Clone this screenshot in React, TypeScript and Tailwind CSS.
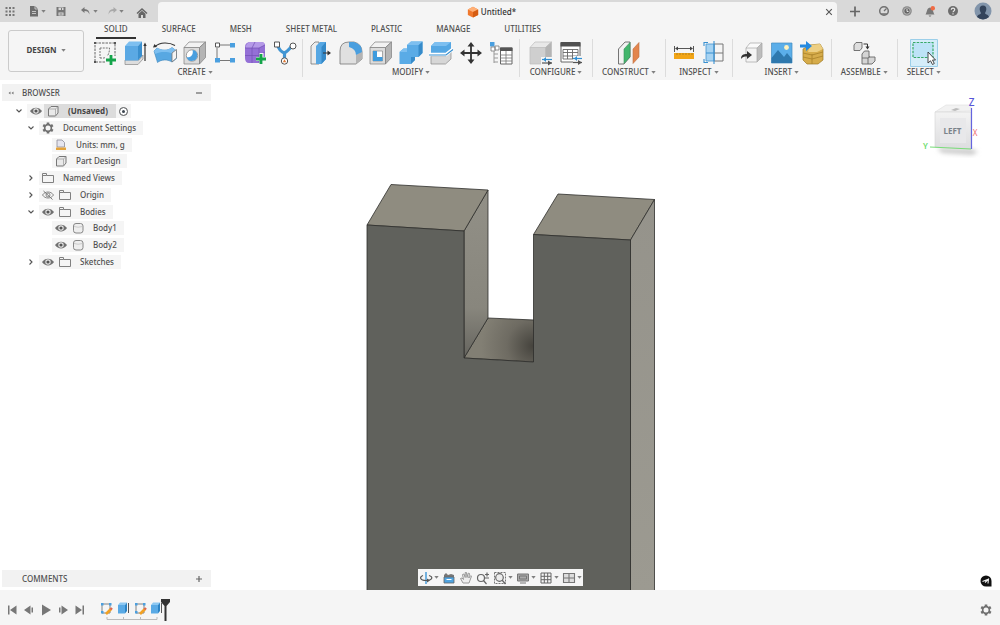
import type { ReactNode } from "react";
import clsx from "clsx";

type IconProps = { size?: number; box?: number; children: ReactNode };

function Svg({ size = 28, box = 28, children }: IconProps) {
  return (
    <svg width={size} height={size} viewBox={`0 0 ${box} ${box}`} fill="none" className="block shrink-0" aria-hidden="true">
      {children}
    </svg>
  );
}

function Small({ children }: { children: ReactNode }) {
  return (
    <Svg size={14} box={14}>
      {children}
    </Svg>
  );
}

function Caret() {
  return (
    <svg width="5" height="3" viewBox="0 0 5 3" className="block shrink-0" aria-hidden="true">
      <path d="M0.3 0H4.7L2.5 2.7Z" fill="#808080" />
    </svg>
  );
}

function GreenPlus({ x, y }: { x: number; y: number }) {
  return <path d={`M${x - 5} ${y}H${x + 5}M${x} ${y - 5}V${y + 5}`} stroke="#14a44a" strokeWidth="2.8" />;
}

/* Box with a top and right side, used by most of the solid tools */
function Cube({ front = "#dcdcdc", top = "#f2f2f2", side = "#b4b4b4", line = "#808080" }) {
  return (
    <g stroke={line} strokeWidth="0.7" strokeLinejoin="round">
      <path d="M3 8.500V25H18.500V8.500Z" fill={front} />
      <path d="M3 8.500L8 3H24.500L18.500 8.500Z" fill={top} />
      <path d="M18.500 8.500L24.500 3V18.500L18.500 25Z" fill={side} />
    </g>
  );
}

const icons = {
  sketch: (
    <Svg>
      <path d="M4 4H24V23H4Z" stroke="#666" strokeWidth="1" strokeDasharray="2.500 1" />
      <path d="M9 9V19M9 19H13C17 18 18.500 14 18.500 9H9" stroke="#777" strokeWidth="1" strokeDasharray="2 1" />
      <path d="M3 3h2v2h-2zM23 3h2v2h-2zM3 22h2v2h-2z" fill="#555" />
      <path d="M14 17H27V27H14Z" fill="#f5f5f5" />
      <GreenPlus x={20} y={21} />
    </Svg>
  ),
  extrude: (
    <Svg>
      <path d="M4 21L18 21L22 16V20L17 25.500H4Z" fill="#ddd" stroke="#888" strokeWidth="0.700" />
      <path d="M4 7H17V21.500H4Z" fill="#5ba9e4" />
      <path d="M4 7L8 2.500H21L17 7Z" fill="#7dbff0" />
      <path d="M17 7L21 2.500V17L17 21.500Z" fill="#3a8fce" />
      <path d="M24 22V6" stroke="#333" strokeWidth="1.200" />
      <path d="M22.300 7L24 3.500L25.700 7Z" fill="#333" />
    </Svg>
  ),
  revolve: (
    <Svg>
      <path d="M4 7.500C9 3 18 3 24 6.500" stroke="#333" strokeWidth="1.200" />
      <path d="M2 8.500L3.500 5L6 8Z" fill="#333" />
      <path d="M3 12L6 9C11 12 17 12 21 8.500L25.500 12V19.500L21 23C16 20 10 20.500 6.500 23.500Z" fill="#58a8e2" stroke="#3a83b9" strokeWidth="0.600" />
      <path d="M3 12L6 9C11 11.500 17 11.500 21 8.500L25 11L21 14.500C16 12.500 9 12.500 4.500 15Z" fill="#7dbff0" />
      <path d="M21 14L25.500 10.500V19L21 23Z" fill="#f4f4f4" stroke="#777" strokeWidth="0.800" />
    </Svg>
  ),
  hole: (
    <Svg>
      <Cube />
      <circle cx="11" cy="16.500" r="5.700" fill="#fff" stroke="#888" strokeWidth="0.800" />
      <path d="M11.500 10.900A5.500 5.500 0 1 1 5.600 18C9 19 13 16 11.500 10.900Z" fill="#4a9fdf" />
    </Svg>
  ),
  pattern: (
    <Svg>
      <path d="M9 6H19M6 9V19M9 21.500H19" stroke="#777" strokeWidth="1" />
      <path d="M4.500 4H8.500V8H4.500Z" fill="#fff" stroke="#555" />
      <path d="M19 4h5v4.500h-5zM4 19h5v4.500H4zM19 19h5v4.500h-5z" fill="#4a9fdf" />
    </Svg>
  ),
  form: (
    <Svg>
      <path d="M4 8Q4 3 10 3H20Q24 3 24 7V17Q23 24 17 24H8Q4 24 4 19Z" fill="#9470d6" />
      <path d="M4.500 8Q6 3 10 3H20Q24 3 23.500 6L18 9H5Z" fill="#b59ae8" />
      <path d="M4 9H18L24 6M4 16.500H18L24 13M11 9V24M18 9V24M14 3L11 9" stroke="#7350b5" strokeWidth="0.700" />
      <path d="M15 20H26M20.500 14V26" stroke="#f5f5f5" strokeWidth="4" />
      <GreenPlus x={20} y={20} />
    </Svg>
  ),
  automate: (
    <Svg>
      <path d="M6.500 5.500C8 12 11 13 13.500 14C17 12 19 9 21.500 6.500M13.500 14V21" stroke="#4095d3" strokeWidth="3.200" />
      <path d="M3.500 3H8.500V8H3.500Z" fill="#fff" stroke="#555" />
      <circle cx="22" cy="7" r="3" fill="#fff" stroke="#555" />
      <circle cx="13.500" cy="22" r="3.200" fill="#fff" stroke="#555" />
      <path d="M11.800 23.200L13.500 20.300L15.200 23.200Z" fill="#e07b39" />
    </Svg>
  ),
  pressPull: (
    <Svg>
      <path d="M4 7L8 3H12V25H4Z" fill="#ececec" stroke="#777" strokeWidth="0.800" />
      <path d="M9 7L13 3H19V20L14.500 25H9Z" fill="#56a7e3" />
      <path d="M14.500 8L19 3V20L14.500 25Z" fill="#3489c8" />
      <path d="M16 14H22" stroke="#333" />
      <path d="M20.500 11.500L24 14L20.500 16.500Z" fill="#333" />
    </Svg>
  ),
  fillet: (
    <Svg>
      <path d="M3 12Q3 3 12 3H17Q25 5 25 13V20L19 25H3Z" fill="#e0e0e0" stroke="#777" strokeWidth="0.800" />
      <path d="M19 25V16L25 12V20Z" fill="#b4b4b4" />
      <path d="M12 3H17Q25 5 25 13L19 16Q19 10 12 8Z" fill="#4a9fdf" />
    </Svg>
  ),
  shell: (
    <Svg>
      <Cube />
      <path d="M6 12H15.500V22H6Z" fill="#fff" stroke="#888" strokeWidth="0.700" />
      <path d="M6 12H10V18H15.500V22H6Z" fill="#3f9bdd" />
    </Svg>
  ),
  combine: (
    <Svg>
      <path d="M10 6L14 2.500H25.500V14L21.500 18H18V21L14 25H2.500V13L6.500 9.500H10Z" fill="#5aabe6" />
      <path d="M21.500 6L25.500 2.500V14L21.500 18ZM14 18H18V21L14 25Z" fill="#368bca" />
      <path d="M10 6L14 2.500H25.500L21.500 6ZM2.500 13L6.500 9.500H10V13Z" fill="#7dbff0" />
    </Svg>
  ),
  splitBody: (
    <Svg>
      <path d="M4 17H19L24 12V20L18.500 25H4Z" fill="#d7d7d7" stroke="#888" strokeWidth="0.700" />
      <path d="M4 7L8 3H24V10L19 14H4Z" fill="#55a7e3" />
      <path d="M4 7L8 3H24L19 7Z" fill="#7dbff0" />
      <path d="M2 15.500H19L26 10" stroke="#fff" strokeWidth="3.400" />
      <path d="M2 16H19L26 10.500" stroke="#3990cf" strokeWidth="1.200" />
    </Svg>
  ),
  move: (
    <Svg>
      <path d="M14 5V23M5 14H23" stroke="#333" strokeWidth="1.800" />
      <path d="M10.500 7.500L14 3L17.500 7.500ZM10.500 20.500L14 25L17.500 20.500ZM7.500 10.500L3 14L7.500 17.500ZM20.500 10.500L25 14L20.500 17.500Z" fill="#333" />
    </Svg>
  ),
  parameters: (
    <Svg>
      <path d="M3 3H7.500V7.500H3Z" fill="#4a9fdf" />
      <path d="M4 8H8V12H4ZM8 7H12V11H8Z" fill="#fff" stroke="#777" strokeWidth="0.800" />
      <path d="M7 12V24M7 15H11M7 19H11M7 23H11" stroke="#999" />
      <path d="M13.500 9H25V25H13.500Z" fill="#fff" stroke="#666" />
      <path d="M13 8.500H25.500V12H13Z" fill="#555" />
      <path d="M13 16H25M13 19H25M13 22H25M19 12V25" stroke="#777" strokeWidth="0.800" />
    </Svg>
  ),
  configure: (
    <Svg>
      <Cube front="#cfcfcf" top="#e8e8e8" side="#b4b4b4" line="#bcbcbc" />
      <path d="M14 18H27V27H14Z" fill="#f5f5f5" />
      <path d="M15 20.500H25" stroke="#318fd2" strokeWidth="1.200" />
      <path d="M15 24H25" stroke="#555" strokeWidth="1.200" />
      <path d="M19 18L16 20.500L19 23Z" fill="#318fd2" />
      <path d="M21 21.500L25 24L21 26.500Z" fill="#555" />
    </Svg>
  ),
  configTable: (
    <Svg>
      <path d="M4 4H23V23H4Z" fill="#fff" stroke="#666" />
      <path d="M3.500 3H23.500V7.500H3.500Z" fill="#505050" />
      <path d="M6 10.500H21V20H6ZM6 13.500H21M6 17H21M10.500 10.500V20M15.500 10.500V20" stroke="#666" strokeWidth="0.900" />
      <path d="M16 17H27V27H16Z" fill="#f5f5f5" />
      <path d="M16 19.500H25" stroke="#318fd2" strokeWidth="1.200" />
      <path d="M16 23.500H25" stroke="#555" strokeWidth="1.200" />
      <path d="M20 17L17 19.500L20 22Z" fill="#318fd2" />
      <path d="M21 21L25 23.500L21 26Z" fill="#555" />
    </Svg>
  ),
  construct: (
    <Svg>
      <path d="M3.500 10L10 3H15V18L9 25H3.500Z" fill="#f1f1f1" stroke="#666" strokeWidth="0.900" />
      <path d="M9 10L15 3.500V18L9 24.500Z" fill="#42b56b" stroke="#36915a" strokeWidth="0.600" />
      <path d="M18 10L24 3.500V18L18 24.500Z" fill="#e3854d" stroke="#bd6e42" strokeWidth="0.600" />
    </Svg>
  ),
  measure: (
    <Svg>
      <path d="M4.500 7V13M23.500 7V13M6 9.500H22" stroke="#444" strokeWidth="0.900" />
      <path d="M8 7.500L5 9.500L8 11.500ZM20 7.500L23 9.500L20 11.500Z" fill="#444" />
      <path d="M4 14H24V20H4Z" fill="#f2a516" />
      <path d="M7 14V16M10 14V16M13 14V16M16 14V16M19 14V16M22 14V16" stroke="#a5781c" strokeWidth="0.800" />
    </Svg>
  ),
  section: (
    <Svg>
      <path d="M14 5H23V22H14ZM14 14H23" stroke="#777" />
      <path d="M6 5H14V22H6Z" fill="#a6d3f2" stroke="#4496d0" strokeWidth="0.800" />
      <path d="M14 2V25M4 7V3.500H8M4 20V23.500H8M6 14H14" stroke="#3990cf" strokeWidth="1.100" />
    </Svg>
  ),
  derive: (
    <Svg>
      <path d="M8 9H19V23H8Z" fill="#f4f4f4" />
      <path d="M8 9L12 4H24L19 9Z" fill="#fafafa" />
      <path d="M19 9L24 4V18L19 23Z" fill="#bdbdbd" />
      <path d="M8 9L12 4H24V18L19 23H8ZM8 9H19V23M19 9L24 4" stroke="#a5a5a5" strokeWidth="0.700" />
      <path d="M3 20C3 16 5 15 9 15V12L14 16L9 20V17.500C6 17.500 4.500 18 3 20Z" fill="#333" />
    </Svg>
  ),
  picture: (
    <Svg>
      <path d="M3.500 4H24V24H3.500Z" fill="#5baee9" stroke="#438dc1" strokeWidth="0.700" />
      <path d="M3.500 19L10 11L16 18L19 14L24 20V24H3.500Z" fill="#2f79ae" />
      <circle cx="18.500" cy="8.500" r="2.400" fill="#fff2bd" />
    </Svg>
  ),
  mcmaster: (
    <Svg>
      <path d="M5 10L12 6L22 5L25 10V21L20 25H9L5 21Z" fill="#d6ac4b" stroke="#9f7a24" strokeWidth="0.700" />
      <path d="M12 6L22 5L25 10L19 13H10Z" fill="#edcf83" />
      <path d="M5 14L14 16L25 13M5 18L14 20L25 17M14 15V25" stroke="#a88028" strokeWidth="0.800" />
      <path d="M2 5.500H8V2L14 7L8 12V8.500H2Z" fill="#258ae0" />
    </Svg>
  ),
  assemble: (
    <Svg>
      <g stroke="#666" strokeWidth="0.900" strokeLinejoin="round">
        <path d="M4 6L6 3.500H12V9L10 11.500H4Z" fill="#dedede" />
        <path d="M12 15L14.500 12H19V18H25V22L22 25H12Z" fill="#d5d5d5" />
        <path d="M12 19H18V25M18 19L20 17.500" />
      </g>
      <path d="M13.500 5H17.500V8.500" stroke="#333" />
      <path d="M15.500 7.500L17.500 10.500L19.500 7.500Z" fill="#333" />
    </Svg>
  ),
  select: (
    <Svg>
      <path d="M0.500 0.500H27.500V27.500H0.500Z" fill="#d5edf9" stroke="#9ccfe9" />
      <path d="M3 3.500H23V18.500H3Z" fill="#bde3f7" stroke="#38a967" strokeWidth="1.200" strokeDasharray="2.500 1.200" />
      <path d="M18 13V24L20.500 21.800L22.500 25.500L24.300 24.500L22.500 21H25.500Z" fill="#fff" stroke="#333" strokeWidth="0.900" />
    </Svg>
  ),
};

const groups = [
  { label: "Create", pad: "px-0.5", tools: ["sketch", "extrude", "revolve", "hole", "pattern", "form", "automate"] },
  { label: "Modify", pad: "px-[3px]", tools: ["pressPull", "fillet", "shell", "combine", "splitBody", "move", "parameters"] },
  { label: "Configure", pad: "px-1.5", tools: ["configure", "configTable"] },
  { label: "Construct", pad: "px-[9px]", tools: ["construct"] },
  { label: "Inspect", pad: "px-[3px]", tools: ["measure", "section"] },
  { label: "Insert", pad: "px-1", tools: ["derive", "picture", "mcmaster"] },
  { label: "Assemble", pad: "px-[9px]", tools: ["assemble"] },
  { label: "Select", pad: "px-[9px]", tools: ["select"] },
] as const;

const ribbonTabs = ["Solid", "Surface", "Mesh", "Sheet Metal", "Plastic", "Manage", "Utilities"];

function Gear({ size = 14, hole = "#f5f5f5" }: { size?: number; hole?: string }) {
  return (
    <Svg size={size} box={14}>
      <path d="M7 1.500V12.500M2.200 4.200L11.800 9.800M2.200 9.800L11.800 4.200" stroke="#707070" strokeWidth="2.600" />
      <circle cx="7" cy="7" r="4.200" fill="#707070" />
      <circle cx="7" cy="7" r="2.500" fill={hole} />
    </Svg>
  );
}

function QuickButton({ label, width, children }: { label: string; width: string; children: ReactNode }) {
  return (
    <button type="button" aria-label={label} className={clsx("flex h-full items-center justify-center", width)}>
      {children}
    </button>
  );
}

function TitleBar() {
  return (
    <header className="flex h-[22px] shrink-0 bg-[#d9d9d9]">
      <div className="flex w-[158px] shrink-0 items-center pl-0.5">
        <QuickButton label="Data panel" width="w-4">
          <Small>
            <path d="M2.500 3h2v2h-2zM6 3h2v2H6zM9.500 3h2v2h-2zM2.500 6.500h2v2h-2zM6 6.500h2v2H6zM9.500 6.500h2v2h-2zM2.500 10h2v2h-2zM6 10h2v2H6zM9.500 10h2v2h-2z" fill="#777" />
          </Small>
        </QuickButton>
        <span className="w-1.5" />
        <QuickButton label="File" width="w-6">
          <Small>
            <path d="M3 2H8L11 5V12.500H3Z" fill="#6d6d6d" />
            <path d="M8 2V5H11M5 7.500H9M5 9.500H9" stroke="#d9d9d9" strokeWidth="0.800" />
          </Small>
          <Caret />
        </QuickButton>
        <QuickButton label="Save" width="w-[26px]">
          <Small>
            <path d="M2.500 3H11.500V12H2.500Z" fill="#777" />
            <path d="M4.500 3.500H9.500V6H4.500ZM4.500 8.500H9.500V11.500H4.500Z" fill="#d9d9d9" />
            <path d="M5.500 10H8.500M7.500 4V6" stroke="#777" />
          </Small>
        </QuickButton>
        <QuickButton label="Undo" width="w-7">
          <Small>
            <path d="M5.500 3L2 6L5.500 9V7C8.500 7 9.500 8 10.500 10.500C10.500 7 9 5.200 5.500 5Z" fill="#777" />
          </Small>
          <Caret />
        </QuickButton>
        <QuickButton label="Redo" width="w-6">
          <Small>
            <path d="M8.500 3L12 6L8.500 9V7C5.500 7 4.500 8 3.500 10.500C3.500 7 5 5.200 8.500 5Z" fill="#a9a9a9" />
          </Small>
          <Caret />
        </QuickButton>
        <div className="h-full grow pt-1">
          <QuickButton label="Home" width="w-full">
            <Small>
              <path d="M1.500 7L7 2L12.500 7L11.500 8L7 4L2.500 8Z" fill="#666" />
              <path d="M3.500 7.800L7 4.800L10.500 7.800V12H8V9H6V12H3.500Z" fill="#666" />
            </Small>
          </QuickButton>
        </div>
      </div>
      <div className="flex grow items-end">
        <div className="flex h-5 w-full items-center rounded-t-sm bg-[#f5f5f5] px-1">
          <div className="flex grow items-center justify-center gap-0.5 pr-1 text-[8px] font-medium text-[#333]">
            <Svg size={12} box={14}>
              <path d="M7 1L13 4V10.500L7 13.500L1 10.500V4Z" fill="#f0782c" />
              <path d="M7 1L13 4L7 7L1 4Z" fill="#ffb077" />
              <path d="M7 7L13 4V10.500L7 13.500Z" fill="#d55c12" />
            </Svg>
            <span>Untitled*</span>
          </div>
          <button type="button" aria-label="Close document">
            <Svg size={8} box={8}>
              <path d="M1.200 1.200L6.800 6.800M6.800 1.200L1.200 6.800" stroke="#555" strokeWidth="1.100" />
            </Svg>
          </button>
        </div>
      </div>
      <div className="flex w-[163px] shrink-0 items-center justify-between pr-2 pl-[11px]">
        <QuickButton label="New document" width="w-3.5">
          <Small>
            <path d="M7 2.500V12.500M2 7.500H12" stroke="#666" strokeWidth="1.700" />
          </Small>
        </QuickButton>
        <div className="flex h-full items-center gap-[9px]">
          <QuickButton label="Extensions" width="w-3.5">
            <Small>
              <circle cx="7" cy="7" r="4.300" stroke="#707070" strokeWidth="1.500" />
              <path d="M7 7L9.500 4.500M4 10H10" stroke="#707070" strokeWidth="1.300" />
            </Small>
          </QuickButton>
          <QuickButton label="Job status" width="w-3.5">
            <Small>
              <circle cx="7" cy="7" r="4.800" fill="#8a8a8a" />
              <circle cx="7" cy="7" r="3.200" fill="#666" stroke="#c8c8c8" strokeWidth="0.800" />
              <path d="M7 5V7.500H8.500" stroke="#eee" strokeWidth="0.900" />
            </Small>
          </QuickButton>
          <QuickButton label="Notifications" width="w-3.5">
            <Small>
              <path d="M2.500 10.500C4 9 3.500 4 7 3.500C10.500 4 10 9 11.500 10.500Z" fill="#777" />
              <path d="M5.500 11.500H8.500L7 13Z" fill="#777" />
              <circle cx="9.800" cy="4.200" r="2.200" fill="#ef6b45" />
            </Small>
          </QuickButton>
          <QuickButton label="Help" width="w-3.5">
            <Small>
              <circle cx="7" cy="7" r="5" fill="#6c6c6c" />
              <path d="M5.300 5.800C5.300 3.500 8.700 3.600 8.700 5.600C8.700 7 7 6.800 7 8.300M7 9.200V10.400" stroke="#e6e6e6" strokeWidth="1.200" />
            </Small>
          </QuickButton>
        </div>
        <QuickButton label="Account" width="w-[18px]">
          <Svg size={18} box={18}>
            <circle cx="9" cy="9" r="8.500" fill="#8295ab" />
            <path d="M3 15C4 12 7 12.500 7 11C5 8 5 3.500 9 3.500S13 8 11 11C11 12.500 14 12 15 15A8.500 8.500 0 0 1 3 15Z" fill="#33435a" />
          </Svg>
        </QuickButton>
      </div>
    </header>
  );
}

function Ribbon() {
  return (
    <div className="flex h-[58px] shrink-0 bg-[#f5f5f5] text-[8px] leading-[10px] font-medium text-[#505050]">
      <div className="shrink-0 py-2 pl-2">
        <button type="button" className="flex h-[42px] w-[76px] items-center justify-center gap-1 rounded-[3px] border border-[#cbcbcb] pb-0.5 font-bold text-[#444]">
          DESIGN <Caret />
        </button>
      </div>
      <div className="flex grow flex-col pl-1">
        <nav className="flex gap-[18px] pl-2" aria-label="Workspace tabs">
          {ribbonTabs.map((tab, i) => (
            <button
              key={tab}
              type="button"
              className={clsx("h-[17px] border-b-2 px-2 pb-px uppercase", i === 0 ? "border-[#333]" : "border-transparent")}
            >
              {tab}
            </button>
          ))}
        </nav>
        <div className="flex">
          {groups.map((group) => (
            <section key={group.label} className={clsx("flex flex-col items-center border-r border-[#dcdcdc] last:border-r-0", group.pad)}>
              <div className="flex h-7">
                {group.tools.map((tool) => (
                  <button key={tool} type="button" aria-label={tool} className="flex w-[30px] justify-center">
                    {icons[tool]}
                  </button>
                ))}
              </div>
              <button type="button" className="flex items-center gap-0.5 uppercase">
                {group.label} <Caret />
              </button>
            </section>
          ))}
        </div>
      </div>
    </div>
  );
}

const treeIcons = {
  eye: (
    <Small>
      <path d="M1 7C4 2.500 10 2.500 13 7C10 11.500 4 11.500 1 7Z" fill="#707070" />
      <circle cx="7" cy="7" r="2.700" fill="#e5e5e5" />
      <circle cx="7" cy="7" r="1.600" fill="#555" />
    </Small>
  ),
  hidden: (
    <Small>
      <path d="M1.500 7C4 3 10 3 12.500 7C10 11 4 11 1.500 7Z" stroke="#888" />
      <circle cx="7" cy="7" r="2" stroke="#888" />
      <path d="M2.500 3L11.500 11.500" stroke="#777" />
    </Small>
  ),
  part: (
    <Small>
      <path d="M2.500 5L5 2.500H12V9L9.500 12H2.500Z" fill="#e9e9e9" stroke="#777" strokeLinejoin="round" />
      <path d="M2.500 5H9.500V12M9.500 5L12 2.500" stroke="#999" strokeWidth="0.700" />
    </Small>
  ),
  gear: <Gear />,
  units: (
    <Small>
      <path d="M3 2H8L10.500 4.500V9H3Z" fill="#e5e5ee" stroke="#8b8b98" strokeWidth="0.800" />
      <path d="M2 9.500H12V12H2Z" fill="#e4a33a" />
    </Small>
  ),
  folder: (
    <Small>
      <path d="M1.500 2.500H5.500V4.500H12.500V11.500H1.500ZM1.500 4.500H5.500" stroke="#808080" />
    </Small>
  ),
  body: (
    <Small>
      <rect x="2.500" y="2.500" width="9.500" height="9.500" rx="2.500" fill="#eee" stroke="#888" />
      <path d="M3 5.500Q7 7 11.500 5.500" stroke="#bbb" strokeWidth="0.700" />
    </Small>
  ),
};

type TreeRow = { text: string; depth: 0 | 1 | 2; open?: boolean; icons: (keyof typeof treeIcons)[] };

const tree: TreeRow[] = [
  { text: "(Unsaved)", depth: 0, open: true, icons: ["eye", "part"] },
  { text: "Document Settings", depth: 1, open: true, icons: ["gear"] },
  { text: "Units: mm, g", depth: 2, icons: ["units"] },
  { text: "Part Design", depth: 2, icons: ["part"] },
  { text: "Named Views", depth: 1, open: false, icons: ["folder"] },
  { text: "Origin", depth: 1, open: false, icons: ["hidden", "folder"] },
  { text: "Bodies", depth: 1, open: true, icons: ["eye", "folder"] },
  { text: "Body1", depth: 2, icons: ["eye", "body"] },
  { text: "Body2", depth: 2, icons: ["eye", "body"] },
  { text: "Sketches", depth: 1, open: false, icons: ["eye", "folder"] },
];

const indents = ["pl-2", "pl-5", "pl-[33px]"];

function BrowserTree() {
  return (
    <ul className="mt-0.5 flex h-[167px] flex-col font-medium text-[#505050]">
      {tree.map((row) => {
        const root = row.depth === 0;
        return (
          <li key={row.text} className={clsx("flex grow basis-0 items-center", indents[row.depth])}>
            <span className="flex w-[17px] justify-center">
              {row.open !== undefined && (
                <button type="button" aria-label={`Toggle ${row.text}`} aria-expanded={row.open}>
                  <Svg size={8} box={8}>
                    <path d={row.open ? "M1.500 2.500L4 5L6.500 2.500" : "M2.500 1.500L5 4L2.500 6.500"} stroke="#555" strokeWidth="1.100" />
                  </Svg>
                </button>
              )}
            </span>
            <div className="flex h-3.5 items-center bg-[#f5f5f5]">
              {row.icons.map((name) => (
                <span key={name} className={clsx("flex h-full w-[17px] items-center justify-center", root && name === "part" && "bg-[#dcdcdc]")}>
                  {treeIcons[name]}
                </span>
              ))}
              {root ? (
                <>
                  <label htmlFor="active-component" className="flex h-full items-center bg-[#dcdcdc] pr-2 pl-[7px] font-bold text-[#444]">
                    {row.text}
                  </label>
                  <input
                    id="active-component"
                    type="radio"
                    defaultChecked
                    className="mx-[3px] size-[9px] appearance-none rounded-full border border-[#777] bg-[#3d4650] shadow-[inset_0_0_0_2px_white]"
                  />
                </>
              ) : (
                <span className="px-[7px]">{row.text}</span>
              )}
            </div>
          </li>
        );
      })}
    </ul>
  );
}

function Model() {
  return (
    <svg viewBox="0 80 1000 510" preserveAspectRatio="xMidYMax slice" className="absolute inset-0 h-full w-full" role="img" aria-label="Model view">
      <defs>
        <linearGradient id="wall" x1="0" y1="0" x2="0" y2="1">
          <stop offset="0" stopColor="#929087" />
          <stop offset="0.7" stopColor="#88867d" />
          <stop offset="1" stopColor="#65645e" />
        </linearGradient>
        <radialGradient id="floor" cx="533" cy="346" r="52" gradientUnits="userSpaceOnUse">
          <stop offset="0" stopColor="#45433d" />
          <stop offset="0.5" stopColor="#6e6b62" />
          <stop offset="1" stopColor="#827f74" />
        </radialGradient>
        <linearGradient id="side" x1="0" y1="0" x2="0" y2="1">
          <stop offset="0" stopColor="#95938b" />
          <stop offset="1" stopColor="#9c9a91" />
        </linearGradient>
      </defs>
      <g stroke="#2f2f2c" strokeWidth="0.8" strokeLinejoin="round">
        <path d="M464 358L488 318L534 320V362Z" fill="url(#floor)" />
        <path d="M464 231L488 190V318L464 358Z" fill="url(#wall)" />
        <path d="M367 225L391 184.500L488 190L464 231Z" fill="#8f8c80" />
        <path d="M533.500 234.500L558 194L654.500 199.500L630.500 240Z" fill="#8f8c80" />
        <path d="M630.500 240L654.500 199.500V592H630.500Z" fill="url(#side)" />
        <path d="M367 225L464 231V358L533.500 362V234.500L630.500 240V592H367Z" fill="#60615c" />
      </g>
    </svg>
  );
}

function ViewCube() {
  return (
    <svg width="64" height="64" viewBox="918 94 64 64" aria-label="View cube: left" role="img">
      <defs>
        <filter id="soft" x="-20%" y="-50%" width="140%" height="200%">
          <feGaussianBlur stdDeviation="2" />
        </filter>
        <linearGradient id="cube" x1="0" y1="0" x2="0" y2="1">
          <stop offset="0" stopColor="#f3f3f3" />
          <stop offset="1" stopColor="#dddddf" />
        </linearGradient>
      </defs>
      <path d="M937 148L972 149L978 152L972 155L942 153Z" fill="#ccc" filter="url(#soft)" />
      <path d="M935 112L946 105H971L971 111Z" fill="#f2f2f2" stroke="#ddd" strokeWidth="0.600" />
      <path d="M935 112L971 112V149L935 147Z" fill="url(#cube)" stroke="#d5d5d5" strokeWidth="0.600" />
      <path d="M940 118H966V143H940Z" fill="#e8e8ea" />
      <path d="M951 110L956 108L960 109L955 111Z" fill="#bbb" />
      <path d="M930 147L971 149" stroke="#78dc78" strokeWidth="1" />
      <path d="M971.500 108V149" stroke="#6464df" strokeWidth="1.200" />
      <text x="952.500" y="134" textAnchor="middle" fontSize="8" fontWeight="700" fill="#7b838a">LEFT</text>
      <text x="971.500" y="106" textAnchor="middle" fontSize="10" fontWeight="500" fill="#5656d8">Z</text>
      <text x="925.500" y="149" textAnchor="middle" fontSize="8" fontWeight="600" fill="#6bdc6b">Y</text>
      <text x="975" y="136" textAnchor="middle" fontSize="8" fill="#ef6f6f">X</text>
    </svg>
  );
}

const navTools: { label: string; menu?: boolean; icon: ReactNode }[] = [
  {
    label: "Orbit",
    menu: true,
    icon: (
      <>
        <path d="M7 1V13" stroke="#3c95d6" strokeWidth="1.400" />
        <path d="M10 4.500C15 6 13 9.500 7 9.500C1 9.500 0 6 4 4.500" stroke="#555" strokeWidth="1.200" />
        <path d="M8 7.500L11 9.500L8 11.500Z" fill="#555" />
      </>
    ),
  },
  {
    label: "Look at",
    icon: (
      <>
        <path d="M2 4L4 2L6 4L9 3L12 4V6H2Z" fill="#777" />
        <path d="M2 6H12V12H2Z" fill="#4fa3e0" stroke="#666" strokeWidth="0.800" />
        <path d="M4.500 8.500H9.500" stroke="#fff" />
      </>
    ),
  },
  {
    label: "Pan",
    icon: <path d="M4 12L1.500 7.500L3 7L4.500 8.500L3.500 3.500L5 3L6.200 6.500V1.500H7.500L8 6.500L9.200 2.200L10.500 2.500L9.800 7L11.800 4.500L12.500 5.200L10 12Z" stroke="#999" strokeWidth="1" fill="#eee" />,
  },
  {
    label: "Zoom",
    icon: (
      <>
        <circle cx="5" cy="7" r="3.500" stroke="#666" strokeWidth="1.200" />
        <path d="M7.500 9.500L10.500 13M9 3.500H13M11 1.500V5.500M9 7H13" stroke="#666" strokeWidth="1.200" />
      </>
    ),
  },
  {
    label: "Fit",
    menu: true,
    icon: (
      <>
        <path d="M1.500 1.500H12.500V12.500H1.500Z" stroke="#777" strokeDasharray="2 1" />
        <circle cx="6.500" cy="6.500" r="3.800" fill="#ececec" stroke="#666" strokeWidth="1.200" />
        <path d="M9 9L12.500 13" stroke="#666" strokeWidth="1.400" />
      </>
    ),
  },
  {
    label: "Display settings",
    menu: true,
    icon: (
      <>
        <path d="M1.500 3H12.500V10H1.500Z" fill="#aaa" stroke="#777" />
        <path d="M3.500 5H10.500V8H3.500ZM4 12H10" stroke="#777" />
      </>
    ),
  },
  {
    label: "Grid and snaps",
    menu: true,
    icon: <path d="M2 2H12V12H2ZM2 5.300H12M2 8.700H12M5.300 2V12M8.700 2V12" stroke="#666" />,
  },
  {
    label: "Viewports",
    menu: true,
    icon: <path d="M1.500 2.500H12.500V11.500H1.500ZM7 2.500V11.500M1.500 7H12.500" fill="#ddd" stroke="#777" strokeWidth="1.100" />,
  },
];

function Canvas() {
  return (
    <main className="relative min-h-0 grow bg-white text-[8px] leading-[10px]">
      <Model />
      <div className="relative grid h-full grid-cols-[209px_1fr_209px] px-0.5">
        <aside className="flex flex-col justify-between pt-1 pb-[3px] text-[#505050]">
          <div>
            <div className="flex h-[17px] items-center bg-[#f2f2f2] pr-2 pl-1.5">
              <button type="button" aria-label="Collapse browser" className="w-3.5">
                <Svg size={6} box={6}>
                  <path d="M2.500 1.500L0.500 3L2.500 4.500ZM5.500 1.500L3.500 3L5.500 4.500Z" fill="#777" />
                </Svg>
              </button>
              <h2 className="grow font-medium">BROWSER</h2>
              <button type="button" aria-label="Minimize browser">
                <Svg size={8} box={8}>
                  <path d="M1 4H7" stroke="#666" strokeWidth="1.200" />
                </Svg>
              </button>
            </div>
            <BrowserTree />
          </div>
          <div className="flex h-[17px] items-center bg-[#f2f2f2] pr-2 pl-5">
            <h2 className="grow font-medium">COMMENTS</h2>
            <button type="button" aria-label="Expand comments">
              <Svg size={8} box={8}>
                <path d="M1 4H7M4 1V7" stroke="#666" strokeWidth="1.200" />
              </Svg>
            </button>
          </div>
        </aside>
        <div className="flex items-end justify-center pb-1">
          <div className="flex h-[17px] items-center gap-[3px] bg-[#f5f5f5] px-px">
            {navTools.map((tool) => (
              <button key={tool.label} type="button" aria-label={tool.label} className="flex items-center gap-px">
                <Small>{tool.icon}</Small>
                {tool.menu && <Caret />}
              </button>
            ))}
          </div>
        </div>
        <div className="flex flex-col items-end justify-between pt-3.5 pb-[3px]">
          <div className="pr-4">
            <ViewCube />
          </div>
          <button type="button" aria-label="Assistant" className="pr-1.5">
            <Svg size={12} box={12}>
              <path d="M6 0.500A5.500 5.500 0 1 0 6 11.500H11.500V6A5.500 5.500 0 0 0 6 0.500Z" fill="#111" />
              <path d="M2.500 6.500L8.500 4L8 8.500M5 7.500L8.500 4" stroke="#eee" strokeWidth="1.100" />
            </Svg>
          </button>
        </div>
      </div>
    </main>
  );
}

const playback = [
  { label: "Go to start", d: "M3 2.500H4.500V11.500H3ZM11.500 2.500V11.500L5 7Z" },
  { label: "Step back", d: "M8.500 2.500V11.500L2 7ZM9.500 4.500H11V9.500H9.500Z" },
  { label: "Play", d: "M3 1.500L12 7L3 12.500Z" },
  { label: "Step forward", d: "M5.500 2.500V11.500L12 7ZM3 4.500H4.500V9.500H3Z" },
  { label: "Go to end", d: "M9.500 2.500H11V11.500H9.500ZM2.500 2.500V11.500L9 7Z" },
];

function Timeline() {
  return (
    <footer className="flex h-[35px] shrink-0 items-center justify-between bg-[#f5f5f5] pt-1 pr-[7px] pl-[5px]">
      <div className="flex items-center gap-3">
        <div className="flex gap-[3px]">
          {playback.map((item) => (
            <button key={item.label} type="button" aria-label={item.label}>
              <Small>
                <path d={item.d} fill="#777" />
              </Small>
            </button>
          ))}
        </div>
        <svg width="72" height="26" viewBox="99 597 72 26" aria-label="Feature history" role="img" fill="none">
          {[106, 140].map((x) => (
            <g key={x}>
              <path d={`M${x - 4} 604H${x + 4}V613H${x - 4}Z`} stroke="#777" strokeWidth="0.9" />
              <path d={`M${x - 5} 603h2.500v2.500h-2.500zM${x + 3} 603h2.500v2.500h-2.500zM${x - 5} 611h2.500v2.500h-2.500z`} fill="#4a9fdf" />
              <path d={`M${x} 614L${x + 5} 609`} stroke="#f2a123" strokeWidth="2.6" />
              <path d={`M${x + 4.5} 609.500L${x + 6} 608`} stroke="#de6650" strokeWidth="2.4" />
            </g>
          ))}
          {[123, 156].map((x) => (
            <g key={x}>
              <path d={`M${x - 5} 605H${x + 2}V613.500H${x - 5}Z`} fill="#5aaae5" />
              <path d={`M${x - 5} 605L${x - 3} 602.500H${x + 4}L${x + 2} 605Z`} fill="#8dc8f2" />
              <path d={`M${x + 2} 605L${x + 4} 602.500V611L${x + 2} 613.500Z`} fill="#2b83c5" />
              <path d={`M${x + 5.5} 603V613`} stroke="#555" />
            </g>
          ))}
          <path d="M107 617V619.500H157V617M123.500 617V619.500M140.500 617V619.500" stroke="#bbb" />
          <path d="M161 599H170V602L166.500 606V621H164.500V606L161 602Z" fill="#333" />
        </svg>
      </div>
      <button type="button" aria-label="Timeline settings">
        <Gear />
      </button>
    </footer>
  );
}

export default function App() {
  return (
    <div className="flex h-screen flex-col overflow-hidden font-['Noto_Sans',sans-serif]">
      <TitleBar />
      <Ribbon />
      <Canvas />
      <Timeline />
    </div>
  );
}
